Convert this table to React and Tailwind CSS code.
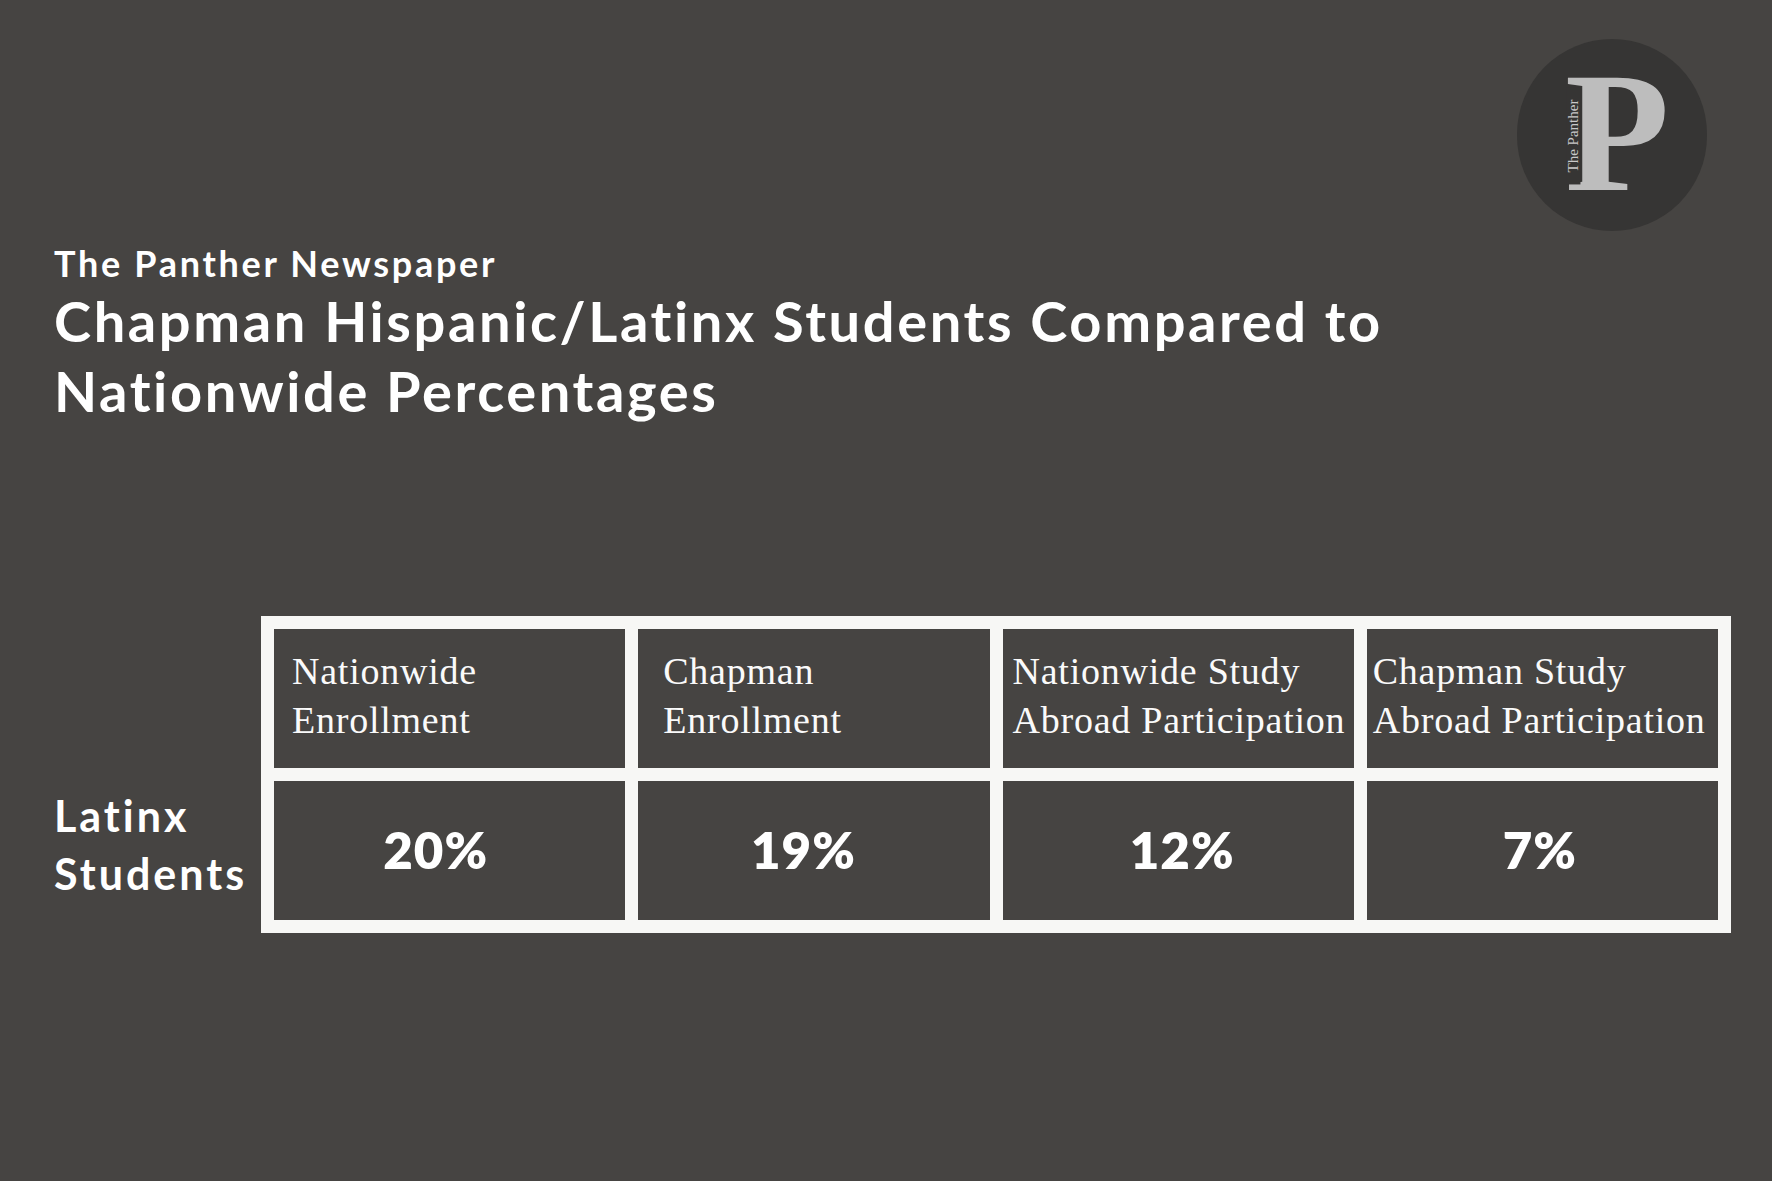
import React from "react";

const headers = [
    { lines: ["Nationwide", "Enrollment"], pad: "pl-[18px]" },
    { lines: ["Chapman", "Enrollment"], pad: "pl-[25px]" },
    { lines: ["Nationwide Study", "Abroad Participation"], pad: "pl-[10px]" },
    { lines: ["Chapman Study", "Abroad Participation"], pad: "pl-[6px]" },
];

// values sit a bit off-centre in the original, nudged per cell
const values = [
    { value: "20%", pad: "pr-[28px]" },
    { value: "19%", pad: "pr-[21px]" },
    { value: "12%", pad: "pl-[8px]" },
    { value: "7%", pad: "pr-[5px]" },
];

function PantherLogo() {
    return (
        <div className="relative w-[190px] h-[192px] rounded-full bg-[#363534] overflow-hidden">
            <span className="absolute left-[48px] top-[8px] text-[171px] leading-[171px] font-bold text-[#bdbdbd] font-['Liberation_Serif',serif]">
                P
            </span>
            <span className="absolute left-[8px] top-[90px] -rotate-90 bg-[#363534] px-[12px] text-[15px] leading-[14px] text-[#c9c9c9] font-['Liberation_Serif',serif] whitespace-nowrap">
                The Panther
            </span>
        </div>
    );
}

export default function App() {
    return (
        <div className="w-[1772px] h-[1181px] bg-[#464442] text-white font-['Lato',sans-serif] [font-variant-ligatures:none] overflow-hidden">
            <div className="flex justify-end pt-[39px] pr-[65px]">
                <PantherLogo />
            </div>

            <div className="pl-[54px] mt-[12px]">
                <div className="text-[36px] leading-[40px] font-bold tracking-[2.7px]">
                    The Panther Newspaper
                </div>
                <h1 className="mt-[3px] text-[56px] leading-[70px] font-bold tracking-[2.6px]">
                    Chapman Hispanic/Latinx Students Compared to
                    <br />
                    Nationwide Percentages
                </h1>
            </div>

            <div className="flex items-end pl-[54px] mt-[190px]">
                <div className="w-[207px] mb-[30px] text-[43px] leading-[58px] font-bold tracking-[3px]">
                    Latinx
                    <br />
                    Students
                </div>
                <div className="w-[1470px] bg-[#f7f7f5] p-[13px] grid grid-cols-4 gap-[13px]">
                    {headers.map((h, i) => (
                        <div
                            key={i}
                            className={`h-[139px] bg-[#464442] pt-[18px] ${h.pad} text-[38px] leading-[49px] tracking-[0.02em] text-[#fafafa] font-['Liberation_Serif',serif] whitespace-nowrap`}
                        >
                            {h.lines[0]}
                            <br />
                            {h.lines[1]}
                        </div>
                    ))}
                    {values.map((v, i) => (
                        <div
                            key={i}
                            className={`h-[139px] bg-[#464442] flex items-center justify-center ${v.pad} text-[51px] font-extrabold tracking-[1px]`}
                        >
                            {v.value}
                        </div>
                    ))}
                </div>
            </div>
        </div>
    );
}
